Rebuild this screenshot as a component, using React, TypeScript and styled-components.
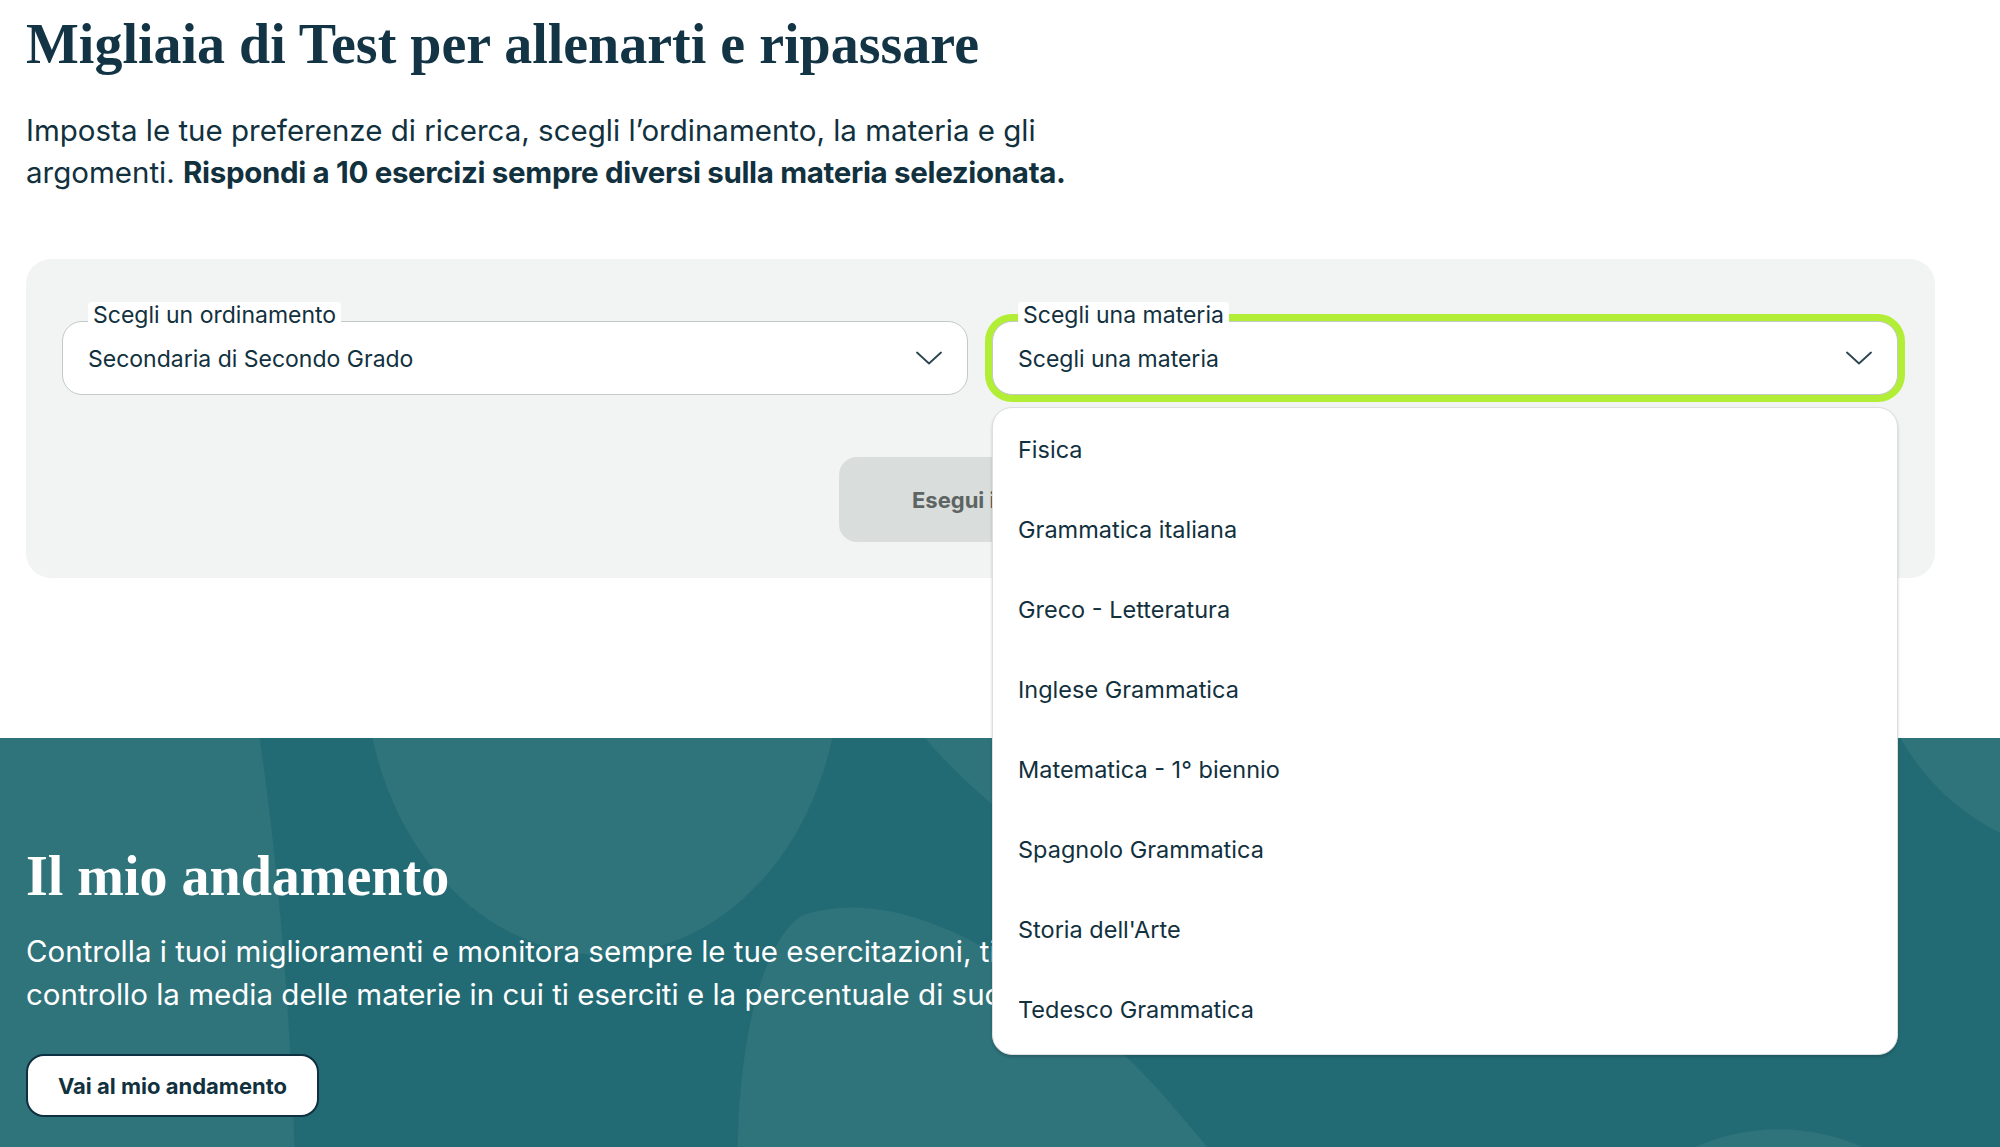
import React from 'react';
import styled, { createGlobalStyle } from 'styled-components';

const GlobalStyle = createGlobalStyle`
    body {
        margin: 0;
        background: #ffffff;
        font-family: Inter, Lato, sans-serif;
        color: #12313e;
    }
`;

const Page = styled.div`
    width: 2000px;
    overflow: hidden;
`;

// Top area with the search panel
const TopSection = styled.section`
    padding: 11px 65px 160px 26px;
`;

const Title = styled.h1<{ $light?: boolean }>`
    margin: 0;
    font-family: 'Liberation Serif', serif;
    font-weight: 700;
    font-size: 56px;
    line-height: 66px;
    color: ${(p) => (p.$light ? '#ffffff' : '#123445')};
`;

const Intro = styled.p<{ $light?: boolean; $maxWidth: number; $size: number; $lineHeight: number }>`
    margin: 0;
    max-width: ${(p) => p.$maxWidth}px;
    font-size: ${(p) => p.$size}px;
    line-height: ${(p) => p.$lineHeight}px;
    color: ${(p) => (p.$light ? '#ffffff' : '#12313e')};

    strong {
        font-weight: 700;
        letter-spacing: -0.33px;
    }
`;

const Panel = styled.div`
    margin-top: 66px;
    background: #f1f4f3;
    border-radius: 25px;
    padding: 62px 37px 36px 36px;
    display: flex;
    flex-direction: column;
    gap: 62px;
`;

const FieldRow = styled.div`
    display: grid;
    grid-template-columns: 1fr 1fr;
    gap: 24px;
`;

const Field = styled.div`
    position: relative;
`;

const FieldLabel = styled.span`
    position: absolute;
    left: 26px;
    top: -19px;
    z-index: 2;
    padding: 0 5px;
    background: #ffffff;
    border-radius: 4px 4px 0 0;
    font-size: 23px;
    line-height: 26px;
    color: #12313e;
`;

const SelectBox = styled.div<{ $focused?: boolean }>`
    height: 74px;
    box-sizing: border-box;
    display: flex;
    align-items: center;
    justify-content: space-between;
    padding: 0 25px 0 25px;
    background: #ffffff;
    border: 1px solid #c3c8c9;
    border-radius: 20px;
    box-shadow: ${(p) => (p.$focused ? '0 0 0 7px #b3ee36' : 'none')};
    font-size: 23px;
    color: #12313e;
`;

const SelectValue = styled.span`
    padding-top: 2px;
`;

const Chevron = () => (
    <svg width="26" height="14" viewBox="0 0 26 14" fill="none">
        <path d="M1 1.5 L13 12.5 L25 1.5" stroke="#2a4450" strokeWidth="1.8" strokeLinecap="round" strokeLinejoin="round" />
    </svg>
);

const Menu = styled.ul`
    position: absolute;
    left: 0;
    right: 0;
    top: 86px;
    z-index: 5;
    margin: 0;
    padding: 3px 0;
    list-style: none;
    background: #ffffff;
    border: 1px solid #dcdedf;
    border-radius: 20px;
    box-shadow: 0 2px 3px rgba(0, 0, 0, 0.18);
`;

const MenuItem = styled.li`
    box-sizing: border-box;
    height: 80px;
    display: flex;
    align-items: center;
    padding: 0 25px 4px 25px;
    font-size: 23.5px;
    color: #12313e;
`;

const ActionRow = styled.div`
    display: flex;
    justify-content: center;
`;

const RunButton = styled.button`
    width: 282px;
    height: 85px;
    border: none;
    border-radius: 18px;
    background: #d9dddc;
    color: #5d6463;
    font-family: Inter, sans-serif;
    font-weight: 700;
    font-size: 22px;
`;

// Teal "andamento" section
const ProgressSection = styled.section`
    position: relative;
    overflow: hidden;
    background: #236b74;
    padding: 105px 26px 80px 26px;
    min-height: 300px;
`;

const Blobs = styled.svg`
    position: absolute;
    inset: 0;
    width: 100%;
    height: 100%;
`;

const ProgressContent = styled.div`
    position: relative;
    display: flex;
    flex-direction: column;
    align-items: flex-start;
    gap: 21px;
`;

const OutlineButton = styled.button`
    margin-top: 17px;
    width: 293px;
    height: 63px;
    background: #ffffff;
    border: 2px solid #0f3040;
    border-radius: 18px;
    font-family: Inter, sans-serif;
    font-weight: 700;
    font-size: 22px;
    color: #12313e;
`;

const subjects = [
    'Fisica',
    'Grammatica italiana',
    'Greco - Letteratura',
    'Inglese Grammatica',
    'Matematica - 1° biennio',
    'Spagnolo Grammatica',
    "Storia dell'Arte",
    'Tedesco Grammatica',
];

export default function App() {
    return (
        <Page>
            <GlobalStyle />
            <TopSection>
                <Title>Migliaia di Test per allenarti e ripassare</Title>
                <Intro $maxWidth={1075} $size={29.5} $lineHeight={42} style={{ marginTop: 32 }}>
                    Imposta le tue preferenze di ricerca, scegli l’ordinamento, la materia e gli argomenti.{' '}
                    <strong>Rispondi a 10 esercizi sempre diversi sulla materia selezionata.</strong>
                </Intro>
                <Panel>
                    <FieldRow>
                        <Field>
                            <FieldLabel>Scegli un ordinamento</FieldLabel>
                            <SelectBox>
                                <SelectValue>Secondaria di Secondo Grado</SelectValue>
                                <Chevron />
                            </SelectBox>
                        </Field>
                        <Field>
                            <FieldLabel>Scegli una materia</FieldLabel>
                            <SelectBox $focused>
                                <SelectValue>Scegli una materia</SelectValue>
                                <Chevron />
                            </SelectBox>
                            {/* open dropdown list */}
                            <Menu>
                                {subjects.map((s) => (
                                    <MenuItem key={s}>{s}</MenuItem>
                                ))}
                            </Menu>
                        </Field>
                    </FieldRow>
                    <ActionRow>
                        <RunButton>Esegui il test</RunButton>
                    </ActionRow>
                </Panel>
            </TopSection>
            <ProgressSection>
                <Blobs viewBox="0 0 2000 409" preserveAspectRatio="xMinYMin slice">
                    <g fill="rgba(255,255,255,0.055)">
                        <path d="M0 0 L219 0 C238 130 248 280 250 409 L0 409 Z" />
                        <ellipse cx="508" cy="-60" rx="200" ry="243" />
                        <path d="M676 150 C760 120 880 190 980 300 C1040 370 1070 409 1070 409 L625 409 C615 320 630 180 676 150 Z" />
                        <path d="M780 0 L1000 0 L1000 160 C920 120 840 70 780 0 Z" />
                        <ellipse cx="470" cy="565" rx="165" ry="220" />
                        <ellipse cx="1780" cy="-88" rx="200" ry="190" />
                        <ellipse cx="1870" cy="470" rx="125" ry="240" />
                        <ellipse cx="1500" cy="540" rx="190" ry="210" />
                    </g>
                </Blobs>
                <ProgressContent>
                    <Title $light>Il mio andamento</Title>
                    <Intro $light $maxWidth={1170} $size={29.5} $lineHeight={43}>
                        Controlla i tuoi miglioramenti e monitora sempre le tue esercitazioni, tieni sotto
                        controllo la media delle materie in cui ti eserciti e la percentuale di successo.
                    </Intro>
                    <OutlineButton>Vai al mio andamento</OutlineButton>
                </ProgressContent>
            </ProgressSection>
        </Page>
    );
}
